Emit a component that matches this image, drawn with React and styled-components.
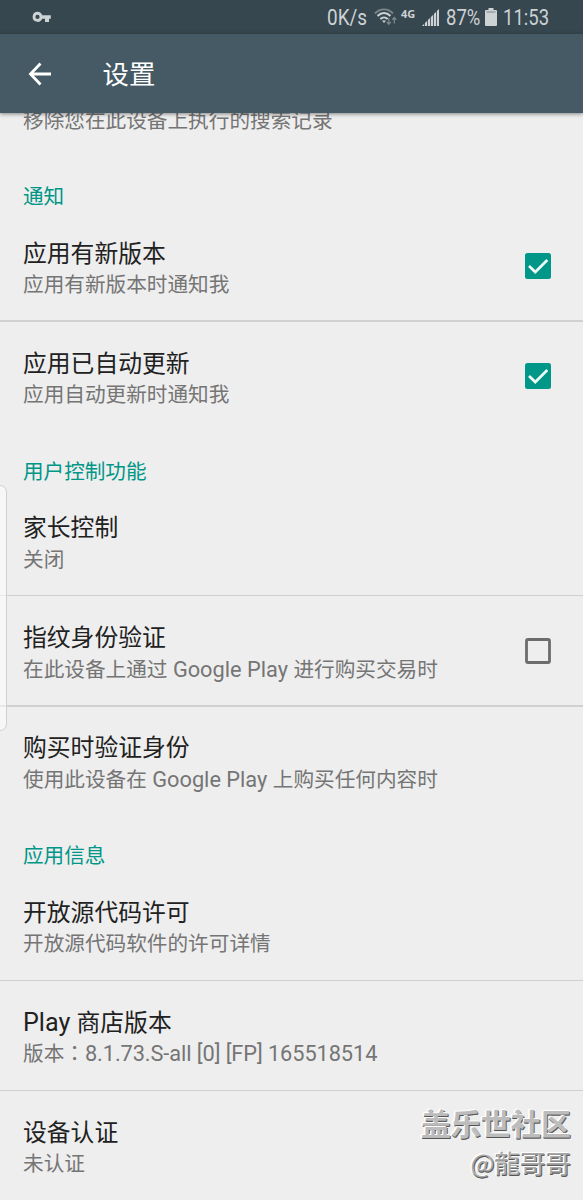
import React from 'react';
import styled, { createGlobalStyle } from 'styled-components';

const GlobalStyle = createGlobalStyle`
  * {
    box-sizing: border-box;
  }
  body {
    margin: 0;
    background: #eee;
    font-family: Roboto, "Noto Sans CJK SC", sans-serif;
  }
`

const Screen = styled.div`
  position: relative;
  display: flex;
  flex-direction: column;
  width: 583px;
  height: 1200px;
  overflow: hidden;
  background: #eee;
`

const StatusBar = styled.div`
  display: flex;
  align-items: center;
  flex: none;
  height: 34px;
  padding: 0 34px 0 32px;
  background: #37474f;
  color: #cdd2d5;
  z-index: 2;
`

const StatusIcons = styled.div`
  display: flex;
  align-items: center;
  margin-left: auto;
`

const StatusText = styled.span`
  width: ${props => props.$width}px;
  margin-right: ${props => props.$gap || 0}px;
  padding-top: 2px;
  font-size: 21.5px;
  line-height: 32px;
  white-space: nowrap;
  transform: scaleX(${props => props.$stretch || 0.86});
  transform-origin: left;
`

const Network = styled.span`
  width: 15px;
  margin: 0 6px 7px 0;
  font-family: "Open Sans", sans-serif;
  font-size: 11px;
  font-weight: 700;
  line-height: 12px;
`

const StatusSvg = styled.svg`
  flex: none;
  margin-right: ${props => props.$gap || 0}px;
`

const AppBar = styled.header`
  display: flex;
  align-items: center;
  flex: none;
  height: 79px;
  padding-left: 28px;
  background: #455a64;
  box-shadow: 0 1px 4px rgba(0, 0, 0, 0.45);
  color: #fff;
  z-index: 2;
`

const AppTitle = styled.h1`
  margin: 0 0 0 50.5px;
  padding-top: 2px;
  font-size: 26.4px;
  font-weight: 400;
  line-height: 40px;
`

const Content = styled.main`
  flex: 1;
  min-height: 0;
  overflow: hidden;
`

const List = styled.div`
  display: flex;
  flex-direction: column;
  margin-top: -66.5px;
`

const SectionTitle = styled.h2`
  flex: none;
  height: 54.5px;
  margin: 0;
  padding: 24.5px 23px 0;
  color: #009688;
  font-size: 20.6px;
  font-weight: 400;
  line-height: 32px;
`

const Row = styled.div`
  display: flex;
  flex: none;
  align-items: center;
  justify-content: space-between;
  height: ${props => 110 + (props.$line || 0) / 2}px;
  margin-top: ${props => (props.$line || 0) / -2}px;
  padding: 0 32px ${props => (props.$line || 0) / 2}px 23px;
  border-top: ${props => props.$line || 0}px solid #d0d0d0;
`

const RowText = styled.div`
  padding-top: 6.2px;
`

const RowTitle = styled.div`
  min-height: 32.6px;
  color: #212121;
  font-size: 23.8px;
  line-height: 32.6px;
`

const Summary = styled.div`
  color: #757575;
  font-size: 20.65px;
  line-height: 30.2px;
`

const Latin = styled.span`
  font-size: 1.055em;
  line-height: 0;
  letter-spacing: ${props => props.$spacing || 0}px;
`

const Colon = styled.span`
  font-family: "Noto Sans CJK TC", sans-serif;
  line-height: 0;
`

const EdgeHandle = styled.div`
  position: absolute;
  top: 485px;
  left: -8px;
  width: 15px;
  height: 246px;
  border: 1px solid #cfcfcf;
  border-radius: 7px;
  background: rgba(255, 255, 255, 0.5);
`

const Watermark = styled.div`
  position: absolute;
  right: 12px;
  bottom: 19px;
  display: flex;
  flex-direction: column;
  align-items: flex-end;
`

const WatermarkLine = styled.span`
  color: ${props => props.$color};
  font-family: "Noto Sans CJK SC", sans-serif;
  font-size: ${props => props.$size}px;
  font-weight: ${props => props.$weight || 400};
  line-height: 39px;
  text-shadow: -1px -1px 0 #fff, 0 1px 0 #555, 1px 1px 0 #666, -2px 0 0 #fafafa;
`

const KeyIcon = () => (
  <StatusSvg width="20" height="12" viewBox="0 0 20 12">
    <path
      d="M5.500 0.800a5 5 0 1 0 4.700 7H13v3.200h4V7.800h1.800V4.300H10.200A5 5 0 0 0 5.500 0.800zM5.500 3.800a2.100 2.100 0 1 1 0 4.200 2.100 2.100 0 0 1 0-4.200z"
      fill="#cdd2d5"
      fillRule="evenodd"
    />
  </StatusSvg>
)

const WifiIcon = () => (
  <StatusSvg width="24" height="18" viewBox="0 0 24 18" $gap={3} fill="none" strokeWidth="1.900">
    <path d="M1 5.500C6 0 14 0 19 5.500" stroke="#7b878d" />
    <path d="M3.500 8C7.500 4 12.500 4 16.500 8M6.300 11C8.500 8.800 11.500 8.800 13.700 11" stroke="#cdd2d5" />
    <path d="M8 12.500h4L10 15z" fill="#cdd2d5" />
    <path d="M14.800 10v6M12.800 14l2 2.300 2-2.300M20.300 15.500v-6M18.300 11.700l2-2.300 2 2.300" stroke="#7b878d" strokeWidth="1.300" />
  </StatusSvg>
)

const SignalIcon = () => (
  <StatusSvg width="17" height="17" viewBox="0 0 17 17" $gap={7} fill="#cdd2d5">
    <path d="M0 17L17 0v17z" opacity="0.200" />
    {[0, 1, 2, 3, 4, 5].map(i => (
      <path key={i} d={`M${i * 3} 17V${17 - i * 3}l2-2V17z`} />
    ))}
  </StatusSvg>
)

const BatteryIcon = () => (
  <StatusSvg width="12" height="18" viewBox="0 0 12 18" $gap={6}>
    <path d="M3.500 0h5v2H11a1 1 0 0 1 1 1v14a1 1 0 0 1-1 1H1a1 1 0 0 1-1-1V3a1 1 0 0 1 1-1h2.500z" fill="#cdd2d5" />
    <path d="M1.500 4h9" stroke="#7b878d" />
  </StatusSvg>
)

const BackIcon = () => (
  <svg width="24" height="24" viewBox="0 0 24 24" fill="none" stroke="#fff" strokeWidth="2.800">
    <path d="M12.500 1.500L2.500 12l10 10.500M2.500 12H23" />
  </svg>
)

const Checkbox = ({ checked }) => (
  <svg width="26" height="26" viewBox="0 0 26 26" fill="none">
    {checked
      ? <>
        <rect width="26" height="26" rx="2.500" fill="#009688" />
        <path d="M4 13l6.300 6L22.300 7" stroke="#eefaf8" strokeWidth="2.700" />
      </>
      : <rect x="1.500" y="1.500" width="23" height="23" rx="1.500" stroke="#6c6c6c" strokeWidth="2.800" />
    }
  </svg>
)

const Setting = ({ title, summary, checked, line }) => (
  <Row $line={line}>
    <RowText>
      <RowTitle>{title}</RowTitle>
      <Summary>{summary}</Summary>
    </RowText>
    {checked !== undefined && <Checkbox checked={checked} />}
  </Row>
)

export default function App() {
  return (
    <Screen>
      <GlobalStyle />
      <StatusBar>
        <KeyIcon />
        <StatusIcons>
          <StatusText $width={47} $stretch={0.88}>0K/s</StatusText>
          <WifiIcon />
          <Network>4G</Network>
          <SignalIcon />
          <StatusText $width={34} $gap={5}>87%</StatusText>
          <BatteryIcon />
          <StatusText $width={46}>11:53</StatusText>
        </StatusIcons>
      </StatusBar>
      <AppBar>
        <BackIcon />
        <AppTitle>设置</AppTitle>
      </AppBar>
      <Content>
        <List>
          <Setting summary="移除您在此设备上执行的搜索记录" />
          <SectionTitle>通知</SectionTitle>
          <Setting title="应用有新版本" summary="应用有新版本时通知我" checked />
          <Setting title="应用已自动更新" summary="应用自动更新时通知我" checked line={2} />
          <SectionTitle>用户控制功能</SectionTitle>
          <Setting title="家长控制" summary="关闭" />
          <Setting
            title="指纹身份验证"
            summary={<>在此设备上通过<Latin> Google Play </Latin>进行购买交易时</>}
            checked={false}
            line={1}
          />
          <Setting
            title="购买时验证身份"
            summary={<>使用此设备在<Latin> Google Play </Latin>上购买任何内容时</>}
            line={2}
          />
          <SectionTitle>应用信息</SectionTitle>
          <Setting title="开放源代码许可" summary="开放源代码软件的许可详情" />
          <Setting
            title={<><Latin>Play </Latin>商店版本</>}
            summary={<>版本<Colon>：</Colon><Latin $spacing={-0.08}>8.1.73.S-all [0] [FP] 165518514</Latin></>}
            line={1}
          />
          <Setting title="设备认证" summary="未认证" line={1} />
        </List>
      </Content>
      <EdgeHandle />
      <Watermark>
        <WatermarkLine $size={30} $weight={700} $color="#bcbcbc">盖乐世社区</WatermarkLine>
        <WatermarkLine $size={25.5} $color="#a8a8a8">@龍哥哥</WatermarkLine>
      </Watermark>
    </Screen>
  )
}
